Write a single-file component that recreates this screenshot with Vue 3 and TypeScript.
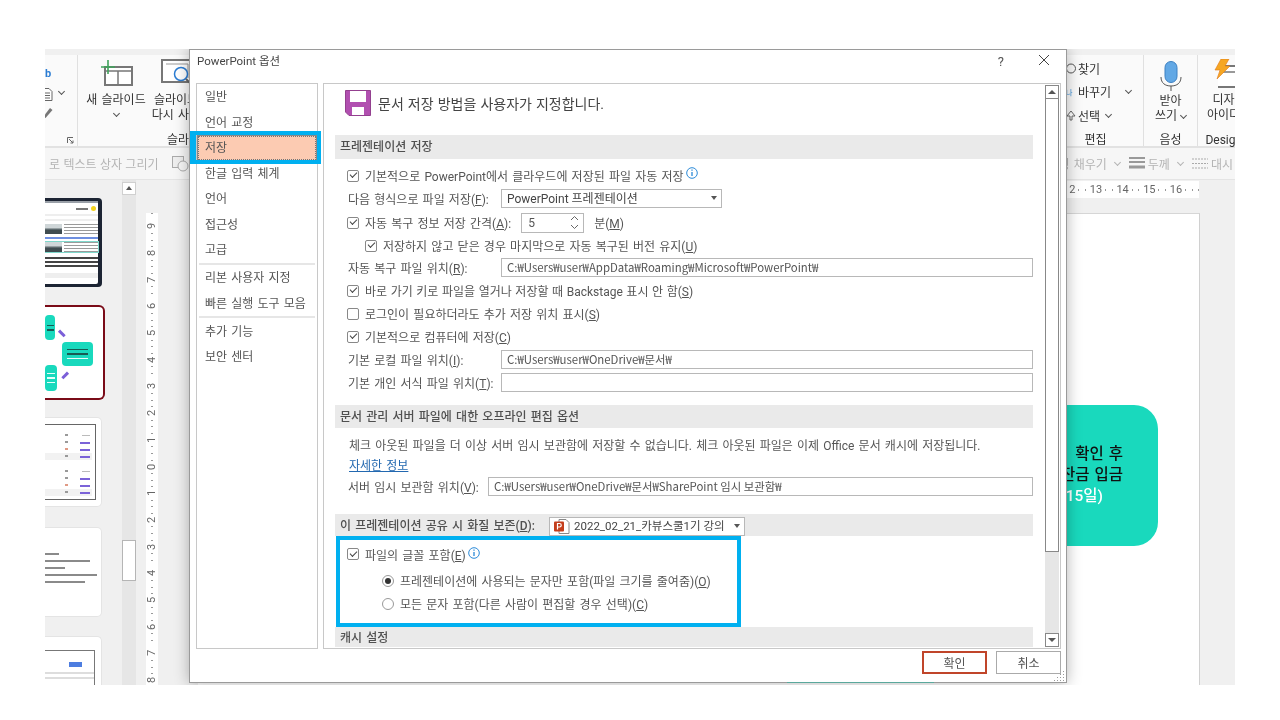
<template>
  <div class="app">
    <!-- PowerPoint behind the dialog -->
    <div class="ribbon">
      <div class="rib-left">
        <div class="rib-group g-mini">
          <span class="mini-b">b</span>
          <svg class="mini-doc" width="12" height="30" viewBox="0 0 12 30">
            <path d="M1 .5h6l3 3v9H1z" fill="#fff" stroke="#666" />
            <path d="M3 5h5M3 7.500h5M3 10h5" stroke="#666" />
            <path d="M1 29l7-9 2.500 2-7 8z" fill="#777" />
            <path d="M0 30l2-2 1 1z" fill="#e0781a" />
          </svg>
          <i class="chev mini-chev"></i>
          <svg class="launcher" width="7" height="7" viewBox="0 0 7 7">
            <path d="M.5 6V.5H6M2 2l4 4M6 3.500V6H3.500" fill="none" stroke="#666" />
          </svg>
        </div>
        <div class="rib-group g-slide">
          <div class="rib-btns">
            <div class="big-btn btn-new">
              <svg width="34" height="30" viewBox="0 0 34 30">
                <rect x="6" y="8" width="27" height="18" fill="#fff" stroke="#777" stroke-width="2" />
                <path d="M6 12h27M19 12v14" stroke="#777" stroke-width="1.500" />
                <path d="M9 1v14M2 8h14" stroke="#3fa45b" stroke-width="1.600" />
              </svg>
              <span>새 슬라이드</span>
              <i class="chev"></i>
            </div>
            <div class="big-btn btn-reuse">
              <svg width="40" height="30" viewBox="0 0 40 30">
                <rect x="6" y="1" width="30" height="22" fill="#fff" stroke="#777" stroke-width="2" />
                <path d="M10 5h22v14" fill="none" stroke="#999" />
                <circle cx="25" cy="15" r="6.500" fill="#fff" stroke="#2b7cd3" stroke-width="1.500" />
                <path d="M30 20l5 5" stroke="#666" stroke-width="2" />
              </svg>
              <span>슬라이드</span>
              <span>다시 사용</span>
            </div>
          </div>
          <div class="group-name">슬라이드</div>
        </div>
      </div>
      <div class="rib-right">
        <div class="rib-group g-edit">
          <div class="edit-rows">
            <div class="edit-row">
              <span class="edit-ic"><svg width="10" height="11" viewBox="0 0 10 11"><circle cx="5" cy="5.500" r="4.500" fill="none" stroke="#555" /></svg></span>찾기
            </div>
            <div class="edit-row"><span class="edit-ic ic-blue">나</span>바꾸기<i class="chev push"></i></div>
            <div class="edit-row">
              <span class="edit-ic"><svg width="10" height="11" viewBox="0 0 10 11"><path d="M5 1l4 5H6v4H4V6H1z" fill="#fff" stroke="#666" /></svg></span>선택<i class="chev near"></i>
            </div>
          </div>
          <div class="group-name">편집</div>
        </div>
        <div class="rib-group g-voice">
          <div class="big-btn">
            <svg class="mic" width="24" height="30" viewBox="0 0 24 30">
              <rect x="6" y="0.500" width="12" height="21" rx="6" fill="#62a8e5" stroke="#3d80c2" />
              <path d="M2 16c0 6 4 9 10 9s10-3 10-9M12 25v5" fill="none" stroke="#555" />
            </svg>
            <span>받아</span>
            <span class="with-chev">쓰기<i class="chev near"></i></span>
          </div>
          <div class="group-name">음성</div>
        </div>
        <div class="rib-group g-design">
          <div class="big-btn">
            <svg width="44" height="30" viewBox="-5 0 44 30">
              <path d="M6 7h36v21H6" fill="#fff" stroke="#777" stroke-width="2" />
              <path d="M8 13h34" stroke="#777" stroke-width="1.500" />
              <path d="M9 0h8l-4 7h5L5 20l3-9H3z" fill="#f6a723" stroke="#e0781a" stroke-width=".6" />
            </svg>
            <span>디자인</span>
            <span>아이디어</span>
          </div>
          <div class="group-name">Designer</div>
        </div>
      </div>
    </div>

    <div class="toolbar">
      <div class="tool-left">
        <span>로 텍스트 상자 그리기</span>
        <svg width="18" height="16" viewBox="0 0 18 16">
          <rect x=".5" y=".5" width="11" height="11" fill="#eee" stroke="#aaa" />
          <circle cx="11" cy="10" r="5" fill="#f6f6f6" stroke="#aaa" />
        </svg>
      </div>
      <div class="tool-right">
        <span class="tool-item">형 채우기<i class="chev pale"></i></span>
        <span class="tool-item">
          <svg width="16" height="13" viewBox="0 0 16 13"><path d="M0 1h16M0 5h16" stroke="#999" stroke-width="2" /><path d="M0 10h16" stroke="#999" stroke-width="3" /></svg>
          두께<i class="chev pale"></i>
        </span>
        <span class="tool-item">
          <svg width="16" height="11" viewBox="0 0 16 11"><path d="M0 1h16M0 5.500h16M0 10h16" stroke="#aaa" stroke-dasharray="2 1" /></svg>
          대시
        </span>
      </div>
    </div>

    <div class="work">
      <div class="thumbs">
        <div class="thumb thumb-phone">
          <div class="phone-in">
            <div class="bar-line dark"></div>
            <div class="phone-head"><u></u><em></em></div>
            <div class="bar-line pale"></div>
            <div class="bar-line pale"></div>
            <div class="photo-row"><i></i><b></b></div>
            <div class="blue-line"></div>
            <div class="photo-row selected"><i></i><b></b></div>
            <div class="text-lines"><b></b><b></b><b></b></div>
            <div class="bar-line pale foot"></div>
          </div>
        </div>
        <div class="thumb thumb-flow">
          <div class="tile t1"><span></span><span></span></div>
          <div class="tile t2"><span></span><span></span><span class="w"></span></div>
          <div class="tile t3"><span class="w"></span><span class="w"></span><span class="w"></span></div>
          <i class="arrow a1"></i>
          <i class="arrow a2"></i>
        </div>
        <div class="thumb thumb-table">
          <div class="table-in">
            <div class="tr"><s></s><b></b></div>
            <div class="tr"><s></s><em></em></div>
            <div class="tr"><s class="red"></s><em></em></div>
            <div class="tr grey"><s></s><em></em></div>
            <div class="spacer"></div>
            <div class="tr"><s></s><b></b></div>
            <div class="tr"><s></s><em></em></div>
            <div class="tr"><s class="red"></s><em></em></div>
            <div class="tr grey"><s></s><em></em></div>
          </div>
        </div>
        <div class="thumb thumb-text">
          <b v-for="w in textLines" :key="w" :style="{ width: w + 'px' }"></b>
        </div>
        <div class="thumb thumb-last">
          <div class="last-in">
            <div class="last-top"><u></u></div>
            <div class="last-line"></div>
            <div class="last-line"></div>
          </div>
        </div>
      </div>
      <div class="scroller">
        <div class="sc-up"></div>
        <div class="sc-thumb"></div>
      </div>
      <div class="v-ruler">
        <span v-for="(n, i) in rulerNums" :key="i"><b>{{ n }}</b></span>
      </div>
      <div class="stage">
        <div class="h-ruler"><span v-for="n in topNums" :key="n">{{ n }}</span></div>
        <div class="slide-row">
          <div class="slide">
            <div class="card">
              <p>확인 후</p>
              <p>잔금 입금</p>
              <p class="card-w">15일)</p>
            </div>
          </div>
        </div>
      </div>
    </div>

    <!-- options dialog -->
    <div class="dialog">
      <div class="titlebar">
        <span class="dlg-title">PowerPoint 옵션</span>
        <span class="help">?</span>
        <svg class="close" width="12" height="12" viewBox="0 0 12 12"><path d="M1 1l10 10M11 1L1 11" stroke="#444" fill="none" /></svg>
      </div>
      <div class="dlg-body">
        <ul class="side">
          <template v-for="item in menu" :key="item.label">
            <li v-if="item.sep" class="sep"></li>
            <li :class="{ on: item.on }">{{ item.label }}</li>
          </template>
        </ul>
        <div class="panel">
          <div class="scroll-area">
            <div class="head">
              <svg width="26" height="26" viewBox="0 0 26 26">
                <path d="M.5.500h25v25H4l-3.500-3.500z" fill="#b14fb0" stroke="#93408f" />
                <rect x="5" y="1" width="16" height="11" fill="#fff" />
                <rect x="7" y="17" width="12" height="8" fill="#fff" />
              </svg>
              <span>문서 저장 방법을 사용자가 지정합니다.</span>
            </div>

            <div class="sec">프레젠테이션 저장</div>
            <div class="row r-first">
              <span class="chk on"></span>
              <span>기본적으로 PowerPoint에서 클라우드에 저장된 파일 자동 저장</span>
              <svg class="info" width="12" height="12" viewBox="0 0 12 12"><circle cx="6" cy="6" r="5.300" fill="none" stroke="#2b8ad8" /><path d="M6 5v4M6 2.500v1.200" stroke="#2b8ad8" stroke-width="1.300" /></svg>
            </div>
            <div class="row">
              <span class="lbl">다음 형식으로 파일 저장(<u>F</u>):</span>
              <div class="combo">PowerPoint 프레젠테이션<i class="tri"></i></div>
            </div>
            <div class="row r-auto">
              <span class="chk on"></span>
              <span>자동 복구 정보 저장 간격(<u>A</u>):</span>
              <div class="spin">5<span class="spin-arrows"><svg width="9" height="15" viewBox="0 0 9 15"><path d="M1 5l3.500-3.500L8 5M1 10l3.500 3.500L8 10" fill="none" stroke="#666" /></svg></span></div>
              <span class="min">분(<u>M</u>)</span>
            </div>
            <div class="row indent">
              <span class="chk on"></span>
              <span>저장하지 않고 닫은 경우 마지막으로 자동 복구된 버전 유지(<u>U</u>)</span>
            </div>
            <div class="row">
              <span class="lbl">자동 복구 파일 위치(<u>R</u>):</span>
              <div class="field">C:₩Users₩user₩AppData₩Roaming₩Microsoft₩PowerPoint₩</div>
            </div>
            <div class="row tight">
              <span class="chk on"></span>
              <span>바로 가기 키로 파일을 열거나 저장할 때 Backstage 표시 안 함(<u>S</u>)</span>
            </div>
            <div class="row">
              <span class="chk"></span>
              <span>로그인이 필요하더라도 추가 저장 위치 표시(<u>S</u>)</span>
            </div>
            <div class="row">
              <span class="chk on"></span>
              <span>기본적으로 컴퓨터에 저장(<u>C</u>)</span>
            </div>
            <div class="row">
              <span class="lbl">기본 로컬 파일 위치(<u>I</u>):</span>
              <div class="field">C:₩Users₩user₩OneDrive₩문서₩</div>
            </div>
            <div class="row">
              <span class="lbl">기본 개인 서식 파일 위치(<u>T</u>):</span>
              <div class="field"></div>
            </div>

            <div class="sec sec-second">문서 관리 서버 파일에 대한 오프라인 편집 옵션</div>
            <div class="row note">체크 아웃된 파일을 더 이상 서버 임시 보관함에 저장할 수 없습니다. 체크 아웃된 파일은 이제 Office 문서 캐시에 저장됩니다.</div>
            <div class="row link-row"><a>자세한 정보</a></div>
            <div class="row">
              <span class="lbl lbl-short">서버 임시 보관함 위치(<u>V</u>):</span>
              <div class="field">C:₩Users₩user₩OneDrive₩문서₩SharePoint 임시 보관함₩</div>
            </div>

            <div class="sec sec-third">
              <span class="third-lbl">이 프레젠테이션 공유 시 화질 보존(<u>D</u>):</span>
              <div class="combo combo-file">
                <svg width="16" height="15" viewBox="0 0 16 15">
                  <path d="M5 .5h7l3 3v11H5z" fill="#fff" stroke="#888" />
                  <rect x="0" y="2.500" width="10" height="10" rx="1" fill="#c43e1c" />
                  <path d="M3.500 10.500v-6h2a1.700 1.700 0 010 3.500h-2" fill="none" stroke="#fff" stroke-width="1.200" />
                </svg>
                2022_02_21_카뷰스쿨1기 강의<i class="tri"></i>
              </div>
            </div>
            <div class="fonts-box">
              <div class="row fonts-chk">
                <span class="chk on"></span>
                <span>파일의 글꼴 포함(<u>E</u>)</span>
                <svg class="info info-up" width="12" height="12" viewBox="0 0 12 12"><circle cx="6" cy="6" r="5.300" fill="none" stroke="#2b8ad8" /><path d="M6 5v4M6 2.500v1.200" stroke="#2b8ad8" stroke-width="1.300" /></svg>
              </div>
              <div class="row radio-row r-1"><span class="radio on"></span><span>프레젠테이션에 사용되는 문자만 포함(파일 크기를 줄여줌)(<u>O</u>)</span></div>
              <div class="row radio-row"><span class="radio"></span><span>모든 문자 포함(다른 사람이 편집할 경우 선택)(<u>C</u>)</span></div>
            </div>
            <div class="sec sec-last">캐시 설정</div>
          </div>
          <div class="vbar">
            <div class="vbtn"><i class="up"></i></div>
            <div class="vthumb"></div>
            <div class="vtrack"></div>
            <div class="vbtn"><i class="down"></i></div>
          </div>
        </div>
      </div>
      <div class="footer">
        <button class="btn ok">확인</button>
        <button class="btn">취소</button>
      </div>
      <svg class="grip" width="11" height="11" viewBox="0 0 11 11">
        <path d="M9 1h1v1H9zM6 4h1v1H6zM9 4h1v1H9zM3 7h1v1H3zM6 7h1v1H6zM9 7h1v1H9zM0 10h1v1H0zM3 10h1v1H3zM6 10h1v1H6zM9 10h1v1H9z" fill="#999" />
      </svg>
      <div class="bottom-tint"></div>
    </div>
  </div>
</template>

<script setup lang="ts">
interface MenuItem {
  label: string
  on?: boolean
  sep?: boolean
}

const menu: MenuItem[] = [
  { label: '일반' },
  { label: '언어 교정' },
  { label: '저장', on: true },
  { label: '한글 입력 체계' },
  { label: '언어' },
  { label: '접근성' },
  { label: '고급' },
  { label: '리본 사용자 지정', sep: true },
  { label: '빠른 실행 도구 모음' },
  { label: '추가 기능', sep: true },
  { label: '보안 센터' }
]

const rulerNums = [9, 8, 7, 6, 5, 4, 3, 2, 1, 0, 1, 2, 3, 4, 5, 6, 7, 8]
const topNums = [12, 13, 14, 15, 16]
const textLines = [14, 45, 20, 52, 40]
</script>

<style>
html, body {
  margin: 0;
  background: #fff;
}
</style>

<style scoped>
.app {
  position: relative;
  width: 1190px;
  height: 636px;
  margin: 49px 0 0 45px;
  overflow: hidden;
  background: #f0f0f0;
  font-family: Roboto, "Noto Sans CJK KR", sans-serif;
  font-size: 12px;
  word-spacing: 1.2px;
  color: #444;
  filter: blur(.3px);
}

/* ribbon */
.ribbon {
  display: flex;
  justify-content: space-between;
  height: 91px;
  background: #fafafa;
  border-top: 6px solid #f0f0f0;
  border-bottom: 2px solid #e2e2e2;
}
.rib-left, .rib-right {
  display: flex;
}
.rib-right {
  margin-right: -25px;
}
.rib-group {
  display: flex;
  flex-direction: column;
  justify-content: space-between;
  box-sizing: border-box;
  height: 91px;
  border-right: 1px solid #e0e0e0;
}
.g-mini {
  width: 33px;
  position: relative;
  display: block;
}
.mini-b {
  position: absolute;
  left: 0;
  top: 12px;
  color: #2b7cd3;
  font-size: 11px;
  font-weight: 700;
}
.mini-doc {
  position: absolute;
  left: -3px;
  top: 33px;
}
.mini-chev {
  position: absolute;
  left: 14px;
  top: 36px;
}
.launcher {
  position: absolute;
  left: 22px;
  top: 82px;
}
.g-slide {
  width: 222px;
  border-right: 0;
}
.rib-btns {
  display: flex;
  gap: 6px;
  padding-left: 8px;
}
.big-btn {
  display: flex;
  flex-direction: column;
  align-items: center;
  line-height: 15px;
  color: #333;
  white-space: nowrap;
}
.big-btn svg {
  margin: 4px 0 4px;
}
.big-btn svg.mic {
  margin: 6px 0 3px;
}
.btn-new {
  width: 60px;
}
.btn-reuse {
  width: 48px;
}
.chev {
  display: inline-block;
  width: 4px;
  height: 4px;
  border-right: 1px solid #555;
  border-bottom: 1px solid #555;
  transform: rotate(45deg);
  flex: none;
  margin-top: -2px;
}
.big-btn > .chev {
  margin-top: 3px;
}
.chev.pale {
  border-color: #b4b4b4;
  margin-left: 5px;
}
.group-name {
  text-align: center;
  font-size: 12px;
  line-height: 15px;
  margin-bottom: -2px;
  color: #333;
}
.g-edit {
  width: 96px;
  padding-left: 18px;
}
.g-edit .group-name {
  margin-left: -18px;
}
.edit-rows {
  display: flex;
  flex-direction: column;
  gap: 5.500px;
  padding-top: 4px;
}
.edit-row {
  display: flex;
  align-items: center;
  gap: 2px;
  height: 18px;
  color: #333;
}
.edit-ic {
  width: 10px;
  font-size: 7px;
  display: flex;
  align-items: center;
}
.ic-blue {
  color: #2b8ad8;
}
.push {
  margin-left: 13px;
}
.near {
  margin-left: 4px;
}
.g-voice {
  width: 54px;
  align-items: center;
}
.with-chev {
  display: flex;
  align-items: center;
}
.g-design {
  width: 62px;
  border-right: 0;
  align-items: center;
}
.g-design .group-name {
  white-space: nowrap;
}

/* drawing toolbar */
.toolbar {
  display: flex;
  justify-content: space-between;
  align-items: center;
  height: 31px;
  background: #f6f6f6;
  color: #b4b4b4;
  border-bottom: 1px solid #e4e4e4;
}
.tool-left {
  display: flex;
  align-items: center;
  gap: 13px;
  margin-left: 4px;
  word-spacing: .4px;
}
.tool-right {
  display: flex;
  align-items: center;
  gap: 9px;
  padding-right: 2px;
}
.tool-item {
  display: flex;
  align-items: center;
  gap: 3px;
  white-space: nowrap;
}
.tool-item svg {
  flex: none;
}

/* thumbnails, rulers, slide */
.work {
  display: flex;
  height: 505px;
}
.thumbs {
  width: 77px;
  flex: none;
  overflow: hidden;
  padding-top: 18px;
  box-sizing: border-box;
  display: flex;
  flex-direction: column;
  gap: 18px;
}
.thumb {
  flex: none;
  background: #fff;
  box-sizing: border-box;
  width: 57px;
  height: 90px;
  border: 1px solid #e4e4e4;
  border-left: 0;
  border-radius: 0 5px 5px 0;
}
.thumb-phone {
  height: 89px;
  background: #1c2433;
  border: 0;
  padding: 3px 4px 3px 0;
  border-radius: 0 4px 4px 0;
}
.phone-in {
  background: #fff;
  height: 83px;
  display: flex;
  flex-direction: column;
  gap: 3px;
  border-radius: 0 2px 2px 0;
}
.bar-line {
  height: 2px;
  background: #eee;
}
.bar-line.dark {
  background: #9aa0a8;
}
.foot {
  height: 5px;
  margin-top: 3px;
}
.phone-head {
  height: 5px;
  position: relative;
}
.phone-head u {
  position: absolute;
  right: 10px;
  top: 2px;
  width: 12px;
  height: 2px;
  background: #777;
}
.phone-head em {
  position: absolute;
  right: 2px;
  top: 0;
  width: 5px;
  height: 5px;
  border-radius: 50%;
  background: #f3d21e;
}
.photo-row {
  display: flex;
  gap: 2px;
  height: 10px;
}
.photo-row i {
  width: 17px;
  background: linear-gradient(#cfd6d8 35%, #3f4c50 60%);
}
.photo-row b {
  flex: 1;
  background: repeating-linear-gradient(#9a9a9a 0 1px, #fff 1px 3px);
}
.blue-line {
  height: 2px;
  background: #6e8fe0;
}
.photo-row.selected {
  outline: 1px solid #7fd8cc;
}
.text-lines {
  display: flex;
  flex-direction: column;
  gap: 2px;
  margin-top: 2px;
}
.text-lines b {
  height: 2px;
  background: #444;
}
.thumb-flow {
  position: relative;
  width: 60px;
  height: 95px;
  border: 2px solid #7a0b18;
  border-left: 0;
  border-radius: 0 6px 6px 0;
}
.tile {
  position: absolute;
  background: #19d9bd;
  border-radius: 4px;
  display: flex;
  flex-direction: column;
  align-items: center;
  justify-content: center;
  gap: 3px;
}
.tile span {
  width: 70%;
  height: 1.500px;
  background: #185a52;
}
.tile span.w {
  background: #e6fffb;
}
.t1 {
  left: 0;
  top: 8px;
  width: 10px;
  height: 25px;
}
.t2 {
  left: 17px;
  top: 35px;
  width: 31px;
  height: 24px;
}
.t3 {
  left: 0;
  top: 58px;
  width: 12px;
  height: 26px;
}
.arrow {
  position: absolute;
  width: 8px;
  height: 2.500px;
  background: #7b5fd8;
}
.a1 {
  left: 13px;
  top: 25px;
  transform: rotate(45deg);
}
.a2 {
  left: 16px;
  top: 67px;
  transform: rotate(-45deg);
}
.thumb-table {
  margin-top: -1px;
  padding: 6px 5px 0 0;
}
.table-in {
  border: 1px solid #666;
  border-left: 0;
  height: 76px;
  padding: 7px 3px 0 0;
  box-sizing: border-box;
}
.tr {
  height: 7px;
  position: relative;
}
.tr s {
  position: absolute;
  right: 24px;
  top: 2px;
  width: 3px;
  height: 2px;
  background: #999;
}
.tr s.red {
  background: #e09a85;
}
.tr b, .tr em {
  position: absolute;
  right: 2px;
  top: 3px;
  height: 1px;
  width: 8px;
  background: #bbb;
}
.tr em {
  width: 10px;
  height: 2px;
  background: #7b63d8;
}
.tr.grey {
  background: #f2f2f2;
}
.spacer {
  height: 8px;
}
.thumb-text {
  margin-top: 2px;
  padding-top: 25px;
  display: flex;
  flex-direction: column;
  gap: 5px;
}
.thumb-text b {
  height: 2px;
  background: #8a8a8a;
}
.thumb-last {
  height: 60px;
  padding: 13px 6px 0 0;
  border-bottom: 0;
  border-radius: 0 5px 0 0;
  margin-top: 1px;
}
.last-in {
  border-top: 1px solid #777;
  border-right: 1px solid #777;
  height: 40px;
  padding-top: 11px;
  box-sizing: border-box;
}
.last-top {
  height: 7px;
  padding-right: 12px;
}
.last-top u {
  display: block;
  width: 13px;
  height: 5px;
  margin-left: auto;
  background: #4d7de0;
}
.last-line {
  height: 2px;
  background: #ddd;
  margin-top: 3px;
}
.scroller {
  width: 14px;
  flex: none;
  background: #e6e6e6;
  position: relative;
  padding-top: 2px;
  box-sizing: border-box;
}
.sc-up {
  height: 13px;
  background: #fff;
  border: 1px solid #d0d0d0;
  box-sizing: border-box;
  position: relative;
}
.sc-up::after {
  content: "";
  position: absolute;
  left: 2.500px;
  top: 3px;
  border: 3.500px solid transparent;
  border-top: 0;
  border-bottom: 4px solid #555;
}
.sc-thumb {
  position: absolute;
  left: 0;
  top: 360px;
  width: 14px;
  height: 41px;
  box-sizing: border-box;
  background: #fff;
  border: 1px solid #b5b5b5;
}
.v-ruler {
  width: 12px;
  flex: none;
  margin-left: 10px;
  margin-top: 33px;
  background: #fff repeating-linear-gradient(#999 0 1px, transparent 1px 6.670px) center / 2px 100% no-repeat;
  color: #666;
  font-size: 11px;
}
.v-ruler span {
  display: flex;
  flex: none;
  height: 26.700px;
  align-items: center;
  justify-content: center;
}
.v-ruler b {
  font-weight: 400;
  background: #fff;
  width: 12px;
  height: 12px;
  line-height: 12px;
  text-align: center;
  transform: rotate(-90deg);
}
.stage {
  flex: 1;
  display: flex;
  flex-direction: column;
  min-width: 0;
}
.h-ruler {
  height: 17px;
  flex: none;
  margin: 1px 36px 0 40px;
  background: #fff repeating-linear-gradient(90deg, #999 0 1px, transparent 1px 6.670px) center / 100% 2px no-repeat;
  display: flex;
  justify-content: flex-end;
  gap: 12.700px;
  padding-right: 16px;
  font-size: 11px;
  line-height: 17px;
  color: #666;
}
.h-ruler span {
  width: 14px;
  background: #fff;
  text-align: center;
}
.slide-row {
  flex: 1;
  padding: 15px 35px 0 40px;
  box-sizing: border-box;
}
.slide {
  height: 100%;
  background: #fff;
  border-right: 1px solid #d0d0d0;
  border-top: 1px solid #d6d6d6;
  position: relative;
}
.card {
  position: absolute;
  right: 41px;
  top: 191px;
  width: 150px;
  height: 141px;
  background: #19d9bd;
  border-radius: 24px;
  text-align: right;
  padding: 39px 35px 0 0;
  box-sizing: border-box;
  color: #111;
  font-size: 15.500px;
  font-weight: 500;
}
.card p {
  margin: 0;
  line-height: 21px;
}
.card-w {
  color: #fff;
  padding-right: 20px;
}

/* dialog */
.dialog {
  position: absolute;
  left: 144px;
  top: 0;
  width: 878px;
  height: 634px;
  background: #fff;
  border: 1px solid #9a9a9a;
  box-sizing: border-box;
  box-shadow: 0 0 14px rgba(0, 0, 0, .3);
  display: flex;
  flex-direction: column;
  color: #555;
}
.titlebar {
  height: 33px;
  flex: none;
  display: flex;
  align-items: center;
  padding: 0 16px 13px 7px;
  box-sizing: border-box;
}
.dlg-title {
  flex: 1;
  color: #444;
  font-size: 11.500px;
  word-spacing: 0;
}
.help {
  margin: 2px 34px 0 0;
  font-size: 13px;
}
.dlg-body {
  flex: 1;
  display: flex;
  gap: 5px;
  padding: 0 5px 0 6px;
  min-height: 0;
}
.side {
  list-style: none;
  margin: 0;
  padding: 0;
  width: 122px;
  height: 566px;
  flex: none;
  box-sizing: border-box;
  border: 1px solid #c8c8c8;
}
.side li {
  height: 25.500px;
  line-height: 26px;
  padding-left: 8px;
  color: #555;
  position: relative;
}
.side li.on {
  background: #fccbb2;
  outline: 1px dotted #777;
  outline-offset: -2px;
  box-shadow: inset 0 0 0 1px #888;
}
.side li.on::after {
  content: "";
  position: absolute;
  left: -7px;
  right: -4px;
  top: -4px;
  bottom: -3px;
  border: 4px solid #00b0f0;
  border-left-width: 6px;
}
.side li.sep {
  height: 2px;
  margin: 0 2px .5px;
  background: #e6e6e6;
  padding: 0;
}
.panel {
  flex: 1;
  height: 566px;
  border: 1px solid #c8c8c8;
  box-sizing: border-box;
  display: flex;
  overflow: hidden;
}
.scroll-area {
  flex: 1;
  min-width: 0;
  padding: 0 12px 0 11px;
}
.head {
  height: 51px;
  display: flex;
  align-items: flex-start;
  gap: 7px;
  padding: 6px 0 0 10px;
  box-sizing: border-box;
  font-size: 14px;
  word-spacing: .6px;
  color: #444;
  line-height: 28px;
}
.head svg {
  flex: none;
}
.sec {
  height: 24px;
  line-height: 22px;
  background: #eaeaea;
  padding-left: 5px;
  font-weight: 500;
  color: #505050;
  display: flex;
  align-items: center;
  white-space: nowrap;
}
.sec-second {
  margin-top: 11px;
  height: 23px;
}
.sec-third {
  margin-top: 16px;
  height: 22px;
  box-sizing: border-box;
  padding-top: 2px;
}
.sec-last {
  height: 20px;
  box-sizing: border-box;
  padding-top: 1px;
}
.row {
  height: 23px;
  display: flex;
  align-items: center;
  padding-left: 12px;
  white-space: nowrap;
  color: #555;
}
.r-first {
  margin-top: 5px;
}
.r-auto {
  height: 25px;
}
.indent {
  height: 21px;
  padding-left: 30px;
}
.tight {
  word-spacing: .6px;
}
.chk {
  width: 10px;
  height: 10px;
  border: 1px solid #888;
  border-radius: 2px;
  margin-right: 6px;
  flex: none;
  position: relative;
}
.chk.on::after {
  content: "";
  position: absolute;
  left: 1.500px;
  top: 1.500px;
  width: 6px;
  height: 3px;
  border-left: 1.200px solid #444;
  border-bottom: 1.200px solid #444;
  transform: rotate(-45deg);
}
.info {
  margin: -5px 0 0 2px;
  flex: none;
}
.info-up {
  margin-top: -3px;
}
.lbl {
  width: 153px;
  flex: none;
  padding-left: 1px;
}
.lbl-short {
  width: 140px;
}
.field {
  flex: 1;
  height: 19px;
  line-height: 17px;
  box-sizing: border-box;
  border: 1px solid #b8b8b8;
  padding-left: 5px;
  color: #555;
  font-family: "Noto Sans CJK KR", sans-serif;
  font-size: 11.400px;
  word-spacing: 0;
}
.combo {
  width: 221px;
  height: 19px;
  line-height: 19px;
  box-sizing: border-box;
  border: 1px solid #b8b8b8;
  padding-left: 5px;
  position: relative;
  background: #fff;
  color: #444;
  font-weight: 400;
  word-spacing: 0;
}
.tri {
  position: absolute;
  right: 4px;
  top: 6px;
  border: 3.500px solid transparent;
  border-bottom: 0;
  border-top: 4px solid #555;
}
.spin {
  width: 63px;
  height: 20px;
  line-height: 18px;
  box-sizing: border-box;
  border: 1px solid #b8b8b8;
  padding-left: 6px;
  margin-left: 10px;
  position: relative;
}
.spin-arrows {
  position: absolute;
  right: 4px;
  top: 1px;
}
.min {
  margin-left: 10px;
}
.note {
  height: 20px;
  margin-top: 6px;
  padding-left: 14px;
}
.link-row {
  height: 21px;
  padding-left: 14px;
}
.link-row a {
  color: #2368b0;
  text-decoration: underline;
}
.third-lbl {
  width: 209px;
  flex: none;
}
.combo-file {
  width: 196px;
  display: flex;
  align-items: center;
  gap: 4px;
  padding-left: 4px;
  white-space: nowrap;
  font-size: 11.500px;
}
.fonts-box {
  width: 405px;
  height: 91px;
  box-sizing: border-box;
  border: 4px solid #00b0f0;
  margin-left: 1px;
}
.fonts-chk {
  padding-left: 7px;
  height: 22px;
  margin-top: 3px;
}
.radio-row {
  padding-left: 42px;
}
.r-1 {
  margin-top: 4px;
}
.radio {
  width: 10px;
  height: 10px;
  border: 1px solid #999;
  border-radius: 50%;
  margin-right: 6px;
  flex: none;
  position: relative;
}
.radio.on::after {
  content: "";
  position: absolute;
  left: 2px;
  top: 2px;
  width: 6px;
  height: 6px;
  border-radius: 50%;
  background: #333;
}
.vbar {
  width: 14px;
  flex: none;
  margin: 1px 1px 1px 0;
  display: flex;
  flex-direction: column;
  background: #e6e6e6;
}
.vbtn {
  height: 14px;
  flex: none;
  box-sizing: border-box;
  border: 1px solid #888;
  background: #fff;
  display: flex;
  align-items: center;
  justify-content: center;
}
.up {
  border: 4px solid transparent;
  border-top: 0;
  border-bottom: 4px solid #555;
}
.down {
  border: 4px solid transparent;
  border-bottom: 0;
  border-top: 4px solid #555;
}
.vthumb {
  height: 453px;
  flex: none;
  box-sizing: border-box;
  background: #fff;
  border: 1px solid #888;
  border-top: 0;
}
.vtrack {
  flex: 1;
}
.footer {
  height: 34px;
  flex: none;
  display: flex;
  justify-content: flex-end;
  gap: 9px;
  padding: 3px 5px 0 0;
  box-sizing: border-box;
}
.btn {
  width: 65px;
  height: 23px;
  background: #fff;
  border: 1px solid #aaa;
  box-sizing: border-box;
  font: inherit;
  color: #555;
  padding: 0;
}
.btn.ok {
  border: 2px solid #c0452a;
}
.grip {
  position: absolute;
  right: 1px;
  bottom: 1px;
}
.bottom-tint {
  position: absolute;
  left: 597px;
  bottom: -1px;
  width: 147px;
  height: 1px;
  background: #5aa89c;
}
</style>
